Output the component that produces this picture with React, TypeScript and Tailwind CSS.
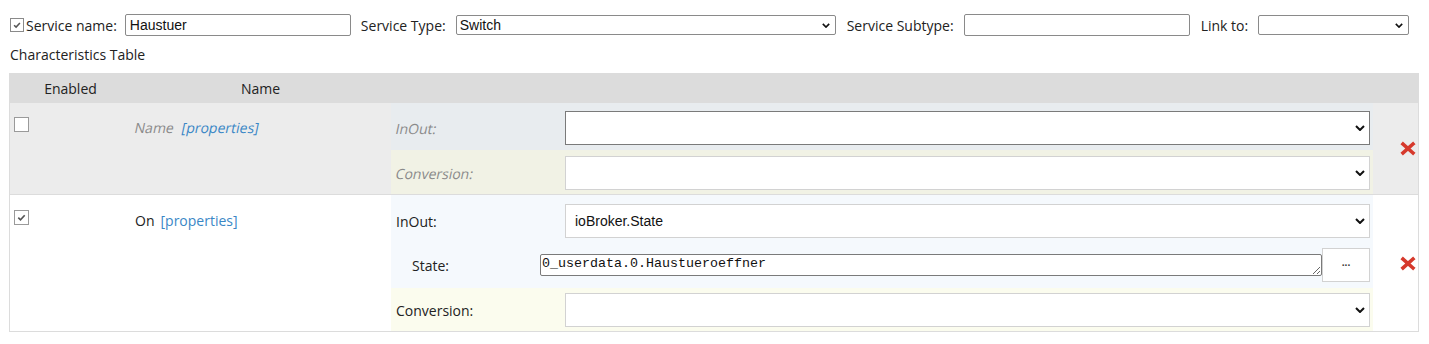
import React from 'react'

function Chevron({ className }: { className?: string }) {
  return (
    <svg viewBox="0 0 10 6" className={className} fill="none" stroke="currentColor" strokeWidth={2}>
      <path d="M1 1l4 4 4-4" />
    </svg>
  )
}

function Check({ className }: { className?: string }) {
  return (
    <svg viewBox="0 0 12 12" className={className} fill="none" stroke="currentColor" strokeWidth={1.8}>
      <path d="M2.5 6.2l2.4 2.3 4.6-5" />
    </svg>
  )
}

function RedX() {
  return (
    <svg viewBox="0 0 16 15" className="w-[16px] h-[15px] text-[#d6392c]" fill="none" stroke="currentColor" strokeWidth={3.6} strokeLinecap="square">
      <path d="M3 3l10 9M13 3L3 12" />
    </svg>
  )
}

function Box({ checked }: { checked?: boolean }) {
  return (
    <div className="w-[15px] h-[15px] bg-white border border-[#9a9a9a] flex items-center justify-center text-[#555]">
      {checked && <Check className="w-[11px] h-[11px]" />}
    </div>
  )
}

// slanted like the browser's synthetic italic
function Oblique({ children, className }: { children: React.ReactNode; className?: string }) {
  return <span className={'inline-block -skew-x-12 ' + (className ?? '')}>{children}</span>
}

function TableSelect({ value, dark }: { value?: string; dark?: boolean }) {
  return (
    <div
      className={
        dark
          ? 'flex-1 h-[34px] bg-white border border-[#7a7a7a] flex items-center justify-between pl-[9px] pr-[4px]'
          : 'flex-1 h-[34px] bg-white border border-[#d2d2d2] flex items-center justify-between pl-[9px] pr-[4px]'
      }
    >
      <span className="font-['Liberation_Sans',Arial,sans-serif] text-[14px] text-[#111]">{value}</span>
      <Chevron className="w-[10px] h-[6px] text-[#111]" />
    </div>
  )
}

export default function App() {
  return (
    <div className="font-['Open_Sans',sans-serif] text-[14px] text-[#222] pt-[14px] bg-white min-h-[344px]">
      {/* service settings */}
      <div className="flex items-center h-[22px] pl-[10px]">
        <div className="w-[14px] h-[14px] border border-[#8a8a8a] bg-white flex items-center justify-center text-[#555]">
          <Check className="w-[10px] h-[10px]" />
        </div>
        <span className="ml-[2px]">Service name:</span>
        <div className="ml-[8px] w-[226px] h-[22px] border border-[#8a8a8a] rounded-[2px] flex items-center pl-[4px] font-['Liberation_Sans',Arial,sans-serif] text-[14px] text-[#111]">
          Haustuer
        </div>
        <span className="ml-[10px]">Service Type:</span>
        <div className="ml-[10px] w-[380px] h-[20px] border border-[#8a8a8a] rounded-[2px] flex items-center justify-between pl-[3px] pr-[5px] font-['Liberation_Sans',Arial,sans-serif] text-[14px] text-[#111]">
          <span>Switch</span>
          <Chevron className="w-[8px] h-[5px]" />
        </div>
        <span className="ml-[11px]">Service Subtype:</span>
        <div className="ml-[10px] w-[226px] h-[22px] border border-[#8a8a8a] rounded-[2px]" />
        <span className="ml-[11px]">Link to:</span>
        <div className="ml-[10px] w-[151px] h-[20px] border border-[#8a8a8a] rounded-[2px] flex items-center justify-end pr-[5px] text-[#111]">
          <Chevron className="w-[8px] h-[5px]" />
        </div>
      </div>

      <div className="pl-[10px] mt-[9px] leading-[19px]">Characteristics Table</div>

      {/* characteristics table */}
      <div className="ml-[9px] mr-[10px] mt-[9px] border-x border-b border-[#dcdcdc] leading-[19px]">
        <div className="flex h-[30px] bg-[#dcdcdc] items-center">
          <div className="w-[120px] text-center pl-[1px]">Enabled</div>
          <div className="w-[261px] text-center">Name</div>
        </div>

        {/* row 1: Name (disabled) */}
        <div className="flex bg-[#ececec] border-b border-[#dcdcdc]">
          <div className="w-[120px] pl-[4px] pt-[14px]">
            <Box />
          </div>
          <div className="w-[261px] pl-[5px] pt-[15px] text-[#8a8a8a]">
            <Oblique>Name</Oblique>
            <Oblique className="ml-[8px] text-[#3a87c6]">[properties]</Oblique>
          </div>
          <div className="w-[982px] text-[#8a8a8a]">
            <div className="h-[47px] bg-[#e8ecef] flex items-start pt-[8px] pr-[3px]">
              <div className="h-[34px] w-[174px] pl-[5px] flex items-center">
                <Oblique>InOut:</Oblique>
              </div>
              <TableSelect dark />
            </div>
            <div className="h-[44px] bg-[#f1f2e5] flex items-start pt-[6px] pr-[3px]">
              <div className="h-[34px] w-[174px] pl-[5px] flex items-center">
                <Oblique>Conversion:</Oblique>
              </div>
              <TableSelect />
            </div>
          </div>
          <div className="flex-1 flex items-center pl-[27px]">
            <RedX />
          </div>
        </div>

        {/* row 2: On */}
        <div className="flex bg-white">
          <div className="w-[120px] pl-[4px] pt-[15px]">
            <Box checked />
          </div>
          <div className="w-[261px] pl-[5px] pt-[16px]">
            On<span className="ml-[6px] text-[#3a87c6]">[properties]</span>
          </div>
          <div className="w-[982px]">
            <div className="h-[47px] bg-[#f5f9fd] flex items-start pt-[9px] pr-[3px]">
              <div className="h-[34px] w-[174px] pl-[5px] flex items-center">InOut:</div>
              <TableSelect value="ioBroker.State" />
            </div>
            <div className="h-[46px] bg-[#f5f9fd] flex items-center pr-[3px]">
              <div className="w-[149px] pl-[21px]">State:</div>
              <textarea
                readOnly
                rows={1}
                value="0_userdata.0.Haustueroeffner"
                className="flex-1 h-[22px] border border-[#7a7a7a] rounded-[2px] bg-white px-[1px] py-[1px] font-['Liberation_Mono','Courier_New',monospace] text-[13.333px] leading-[16px] text-[#111] resize overflow-hidden"
              />
              <div className="w-[48px] h-[34px] bg-white border border-[#d2d2d2] flex items-center justify-center text-[10px] font-bold leading-none text-[#333]">
                ···
              </div>
            </div>
            <div className="h-[43px] bg-[#fbfcee] flex items-start pt-[5px] pr-[3px]">
              <div className="h-[34px] w-[174px] pl-[5px] flex items-center">Conversion:</div>
              <TableSelect />
            </div>
          </div>
          <div className="flex-1 flex items-center pl-[27px]">
            <RedX />
          </div>
        </div>
      </div>
    </div>
  )
}
